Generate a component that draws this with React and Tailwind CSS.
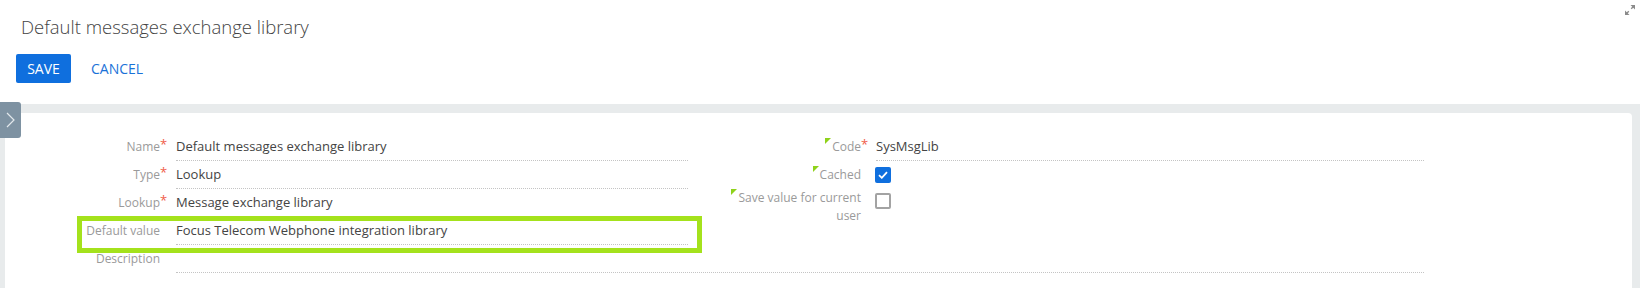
import React from 'react';

const leftFields = [
  { label: 'Name', value: 'Default messages exchange library', required: true },
  { label: 'Type', value: 'Lookup', required: true },
  { label: 'Lookup', value: 'Message exchange library', required: true },
  { label: 'Default value', value: 'Focus Telecom Webphone integration library' },
];

const Marker = () => (
  <span className="inline-block w-0 h-0 align-top mt-[0px] mr-[1px] border-t-[6px] border-t-[#8fd21a] border-r-[6px] border-r-transparent" />
);

const Checkbox = ({ checked }) =>
  checked ? (
    <span className="flex items-center justify-center w-[16px] h-[16px] rounded-[2px] bg-[#0f6fde]">
      <svg width="10" height="8" viewBox="0 0 10 8">
        <path d="M1 4.2 L3.8 6.8 L9 1.2" fill="none" stroke="white" strokeWidth="1.8" />
      </svg>
    </span>
  ) : (
    <span className="block w-[16px] h-[16px] rounded-[2px] border-2 border-[#a3a3a3] bg-white" />
  );

const LeftRow = ({ label, value, required }) => (
  <div className="flex h-[28px]">
    <div className="w-[91px] flex items-center justify-end text-[12px] text-[#9a9a9a]">
      <span className="truncate">{label}</span>
      <span className="w-[8px] text-[#f0604a] self-start mt-[5px] leading-none text-[13px]">{required ? '*' : ''}</span>
    </div>
    <div className="ml-[8px] w-[512px] flex items-center border-b border-dotted border-[#c4c4c4] text-[13px] text-[#444]">
      {value}
    </div>
  </div>
);

export default function App() {
  return (
    <div className="relative w-[1640px] h-[288px] overflow-hidden bg-white font-['Open_Sans',sans-serif]">
      {/* header */}
      <div className="pt-[15px] pb-[21px]">
        <h1 className="pl-[21px] h-[24px] leading-[24px] text-[18.5px] font-light text-[#444]">Default messages exchange library</h1>
        <div className="mt-[15px] pl-[16px] flex items-center">
          <button className="w-[55px] h-[29px] rounded-[2px] bg-[#0f6fde] text-white text-[14px]">SAVE</button>
          <button className="ml-[20px] h-[29px] text-[#1a72d8] text-[14px]">CANCEL</button>
        </div>
      </div>

      {/* maximize */}
      <svg className="absolute top-[5px] left-[1625px]" width="10" height="10" viewBox="0 0 10 10" fill="#8a8a8a" stroke="#8a8a8a">
        <path d="M10 0 L10 4.5 L5.5 0 Z" stroke="none" />
        <path d="M8.5 1.5 L6.2 3.8" strokeWidth="1.3" />
        <path d="M0 10 L0 5.5 L4.5 10 Z" stroke="none" />
        <path d="M1.5 8.5 L3.8 6.2" strokeWidth="1.3" />
      </svg>

      {/* body */}
      <div className="relative bg-[#e8ebec] pt-[9px] pl-[5px] pr-[8px] h-[184px]">
        <button className="absolute left-0 top-[-2px] w-[21px] h-[36px] rounded-r-[3px] bg-[#7e92a2] flex items-center justify-center">
          <svg width="9" height="16" viewBox="0 0 9 16">
            <path d="M1 1 L8 8 L1 15" fill="none" stroke="#e3e8ec" strokeWidth="1.2" />
          </svg>
        </button>

        <div className="bg-white rounded-tr-[4px] h-full pt-[20px] pl-[72px]">
          <div className="flex">
            <div className="relative w-[625px]">
              {leftFields.map((f) => (
                <LeftRow key={f.label} {...f} />
              ))}
              <div className="absolute left-0 top-[83px] w-[625px] h-[37px] border-[5px] border-[#a4e21c]" />
            </div>

            <div className="ml-[29px]">
              <div className="flex h-[28px]">
                <div className="w-[137px] flex items-center justify-end text-[12px] text-[#9a9a9a]">
                  <span><Marker />Code</span>
                  <span className="w-[7px] text-[#f0604a] self-start mt-[5px] leading-none text-[13px]">*</span>
                </div>
                <div className="ml-[8px] w-[548px] flex items-center border-b border-dotted border-[#c4c4c4] text-[13px] text-[#444]">
                  SysMsgLib
                </div>
              </div>
              <div className="flex h-[28px]">
                <div className="w-[137px] pr-[7px] flex items-center justify-end text-[12px] text-[#9a9a9a]">
                  <span><Marker />Cached</span>
                </div>
                <div className="ml-[7px] flex items-center">
                  <Checkbox checked />
                </div>
              </div>
              <div className="flex">
                <div className="w-[137px] pr-[7px] text-right text-[12px] leading-[18px] text-[#9a9a9a]">
                  <Marker />Save value for current user
                </div>
                <div className="ml-[7px] pt-[4px]">
                  <Checkbox />
                </div>
              </div>
            </div>
          </div>

          <div className="flex h-[28px]">
            <div className="w-[91px] pr-[8px] flex items-center justify-end text-[12px] text-[#9a9a9a]">
              Description
            </div>
            <div className="ml-[8px] w-[1248px] border-b border-dotted border-[#c4c4c4]" />
          </div>
        </div>
      </div>
    </div>
  );
}
